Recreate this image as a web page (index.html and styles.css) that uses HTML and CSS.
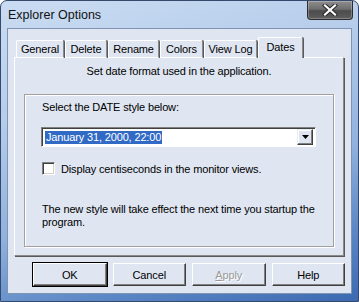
FILE: index.html
```html
<!DOCTYPE html>
<html>
<head>
<meta charset="utf-8">
<link rel="stylesheet" href="styles.css">
</head>
<body>
<div class="window">
  <div class="titlebar">
    <span class="title">Explorer Options</span>
    <div class="close">
      <svg width="16" height="12" viewBox="0 0 16 12">
        <path d="M3 1.5 L13 10.5 M13 1.5 L3 10.5" stroke="#2a2a2a" stroke-width="4.2" stroke-linecap="square"/>
        <path d="M3 1.5 L13 10.5 M13 1.5 L3 10.5" stroke="#ffffff" stroke-width="2.2" stroke-linecap="square"/>
      </svg>
    </div>
  </div>
  <div class="client">
    <div class="tabs">
      <div class="tab w-general">General</div>
      <div class="tab w-delete">Delete</div>
      <div class="tab w-rename">Rename</div>
      <div class="tab w-colors">Colors</div>
      <div class="tab w-viewlog">View Log</div>
      <div class="tab selected w-dates">Dates</div>
    </div>
    <div class="panel">
      <div class="intro">Set date format used in the application.</div>
      <div class="group">
        <div class="label">Select the DATE style below:</div>
        <div class="combo">
          <div class="combo-field"><span class="sel">January 31, 2000, 22:00</span></div>
          <div class="combo-btn">
            <svg width="7" height="4" viewBox="0 0 7 4"><path d="M0 0 H7 L3.5 4 Z" fill="#000"/></svg>
          </div>
        </div>
        <div class="check-row">
          <div class="checkbox"></div>
          <span>Display centiseconds in the monitor views.</span>
        </div>
        <div class="note">The new style will take effect the next time you startup the program.</div>
      </div>
    </div>
    <div class="buttons">
      <div class="btn default">OK</div>
      <div class="btn">Cancel</div>
      <div class="btn disabled"><span class="u">A</span>pply</div>
      <div class="btn">Help</div>
    </div>
  </div>
</div>
</body>
</html>
```
FILE: styles.css
```css
html, body {
  margin: 0;
  padding: 0;
  background: #ffffff;
}
.window {
  width: 359px;
  height: 302px;
  box-sizing: border-box;
  border: 1px solid #34496b;
  border-radius: 7px 7px 0 0;
  background: linear-gradient(165deg, #cadcf2 0%, #b6cdeb 30%, #90b2de 60%, #5b87c5 82%, #3c6ab0 100%);
  display: flex;
  flex-direction: column;
  padding: 0 6px 7px 6px;
  font-family: "Liberation Sans", Arial, sans-serif;
  font-size: 11px;
  letter-spacing: -0.15px;
  color: #000;
}
.titlebar {
  height: 27px;
  display: flex;
  align-items: flex-start;
  flex-shrink: 0;
}
.title {
  font-family: "Liberation Sans", Arial, sans-serif;
  font-size: 12.5px;
  letter-spacing: 0;
  color: #111;
  margin-top: 7px;
  margin-left: 1px;
}
.close {
  margin-left: auto;
  margin-right: -1px;
  width: 46px;
  height: 19px;
  box-sizing: border-box;
  border: 1px solid #2d2d2d;
  border-top: none;
  border-radius: 0 0 4px 4px;
  background: linear-gradient(#8e8e8e 0%, #6e6e6e 45%, #4c4c4c 55%, #5e5e5e 100%);
  box-shadow: inset 0 0 0 1px rgba(255,255,255,0.25);
  display: flex;
  align-items: center;
  justify-content: center;
}
.client {
  flex: 1;
  background: #dfe6f2;
  border: 1px solid #7f93b3;
  display: flex;
  flex-direction: column;
  padding: 8px 6px 0 6px;
}
.tabs {
  display: flex;
  align-items: flex-end;
  height: 21px;
  padding-left: 2px;
  position: relative;
  z-index: 1;
  margin-bottom: -1px;
}
.tab {
  height: 18px;
  box-sizing: border-box;
  border-top: 1px solid #fff;
  border-left: 1px solid #fff;
  border-right: 1px solid #8a8a8a;
  border-radius: 2px 2px 0 0;
  box-shadow: 1px 0 0 #5a5a5a;
  display: flex;
  align-items: center;
  justify-content: center;
  margin-right: 1px;
  background: #dfe6f2;
  border-bottom: 1px solid #fff;
}
.tab.selected {
  height: 21px;
  border-bottom: none;
  padding-bottom: 2px;
}
.w-general { width: 48px; }
.w-delete { width: 42px; }
.w-rename { width: 51px; }
.w-colors { width: 43px; }
.w-viewlog { width: 53px; }
.w-dates { width: 45px; }
.panel {
  height: 199px;
  box-sizing: border-box;
  border-top: 1px solid #fff;
  border-left: 1px solid #fff;
  border-right: 1px solid #8a8a8a;
  border-bottom: 1px solid #8a8a8a;
  box-shadow: 1px 1px 0 #5a5a5a;
  margin-right: 1px;
  padding: 0 9px 8px 9px;
  display: flex;
  flex-direction: column;
}
.intro {
  text-align: center;
  margin-top: 7px;
  line-height: 13px;
  height: 13px;
}
.group {
  margin-top: 16px;
  flex: 1;
  border: 1px solid #a0a0a0;
  box-shadow: inset 1px 1px 0 #fff, 1px 1px 0 #fff;
  padding: 6px 17px 0 16px;
  display: flex;
  flex-direction: column;
}
.label {
  line-height: 13px;
  margin-left: 1px;
}
.combo {
  margin-top: 13px;
  height: 20px;
  box-sizing: border-box;
  background: #fff;
  border-top: 1px solid #808080;
  border-left: 1px solid #808080;
  border-right: 1px solid #fff;
  border-bottom: 1px solid #fff;
  box-shadow: inset 1px 1px 0 #404040;
  display: flex;
  align-items: center;
  padding: 1px 2px 1px 2px;
}
.combo-field {
  flex: 1;
  display: flex;
  align-items: center;
  padding-left: 1px;
}
.sel {
  background: #316ac5;
  color: #fff;
  line-height: 13px;
  padding: 0 1px;
}
.combo-btn {
  width: 16px;
  height: 16px;
  box-sizing: border-box;
  background: #dfe6f2;
  border-top: 1px solid #e8ecf4;
  border-left: 1px solid #e8ecf4;
  border-right: 1px solid #404040;
  border-bottom: 1px solid #404040;
  box-shadow: inset -1px -1px 0 #808080, inset 1px 1px 0 #fff;
  display: flex;
  align-items: center;
  justify-content: center;
}
.check-row {
  margin-top: 15px;
  display: flex;
  align-items: center;
  margin-left: 1px;
}
.checkbox {
  width: 13px;
  height: 13px;
  box-sizing: border-box;
  background: #fff;
  border-top: 1px solid #808080;
  border-left: 1px solid #808080;
  border-right: 1px solid #fff;
  border-bottom: 1px solid #fff;
  box-shadow: inset 1px 1px 0 #404040, inset -1px -1px 0 #d4d0c8;
  margin-right: 6px;
}
.note {
  margin-top: 28px;
  line-height: 13px;
  margin-left: 1px;
}
.buttons {
  display: flex;
  gap: 6px;
  margin-top: 7px;
  padding-left: 19px;
}
.btn {
  width: 75px;
  height: 23px;
  box-sizing: border-box;
  border-top: 1px solid #fff;
  border-left: 1px solid #fff;
  border-right: 1px solid #404040;
  border-bottom: 1px solid #404040;
  box-shadow: inset -1px -1px 0 #808080;
  display: flex;
  align-items: center;
  justify-content: center;
}
.btn.default {
  outline: 1px solid #000;
}
.btn.disabled {
  color: #9a9a9a;
  text-shadow: 1px 1px 0 #fff;
}
.u {
  text-decoration: underline;
}
```
